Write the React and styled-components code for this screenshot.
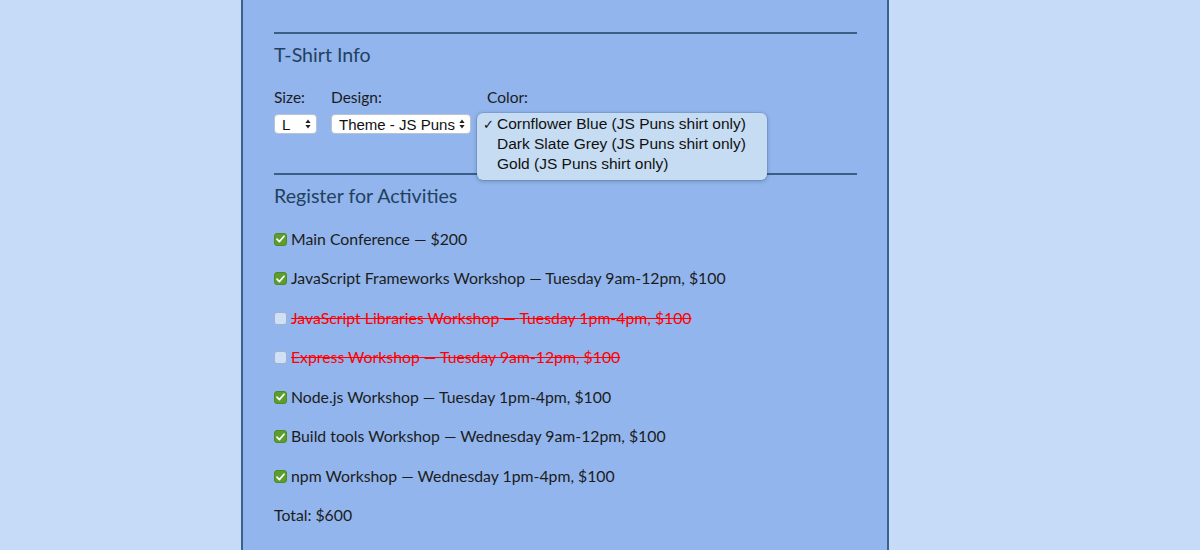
import React from 'react';
import styled, { createGlobalStyle } from 'styled-components';

const GlobalStyle = createGlobalStyle`
    html, body {
        margin: 0;
        padding: 0;
        background: #c6dbf8;
        height: 550px;
        overflow: hidden;
    }
    body {
        font-family: "Lato", "Noto Sans", sans-serif;
        color: #1c1c1c;
    }
`;

const activities = [
    { name: 'Main Conference', info: '$200', checked: true },
    { name: 'JavaScript Frameworks Workshop', info: 'Tuesday 9am-12pm, $100', checked: true },
    { name: 'JavaScript Libraries Workshop', info: 'Tuesday 1pm-4pm, $100', disabled: true },
    { name: 'Express Workshop', info: 'Tuesday 9am-12pm, $100', disabled: true },
    { name: 'Node.js Workshop', info: 'Tuesday 1pm-4pm, $100', checked: true },
    { name: 'Build tools Workshop', info: 'Wednesday 9am-12pm, $100', checked: true },
    { name: 'npm Workshop', info: 'Wednesday 1pm-4pm, $100', checked: true },
];

const colors = [
    'Cornflower Blue (JS Puns shirt only)',
    'Dark Slate Grey (JS Puns shirt only)',
    'Gold (JS Puns shirt only)',
];

function SelectArrows() {
    return (
        <svg width="6" height="10" viewBox="0 0 6 10">
            <path d="M3 0.5 L5.6 4 L0.4 4 Z" fill="#222" />
            <path d="M3 9.5 L5.6 6 L0.4 6 Z" fill="#222" />
        </svg>
    );
}

function CheckBox({ checked }) {
    return (
        <Box checked={checked}>
            {checked && (
                <svg width="9" height="8" viewBox="0 0 9 8">
                    <path d="M1 4.2 L3.4 6.6 L8 1.2" stroke="#fff" strokeWidth="1.7" fill="none" strokeLinecap="round" strokeLinejoin="round" />
                </svg>
            )}
        </Box>
    );
}

class App extends React.Component {
    render() {
        return (
            <>
                <GlobalStyle />
                <Panel>
                    <Section>
                        <Legend>T-Shirt Info</Legend>
                        <ShirtRow>
                            <Field>
                                <FieldLabel>Size:</FieldLabel>
                                <Select width="43px">
                                    <span>L</span>
                                    <SelectArrows />
                                </Select>
                            </Field>
                            <Field>
                                <FieldLabel>Design:</FieldLabel>
                                <Select width="140px">
                                    <span>Theme - JS Puns</span>
                                    <SelectArrows />
                                </Select>
                            </Field>
                            <Field spaced>
                                <FieldLabel>Color:</FieldLabel>
                                <Select width="200px" />
                                <Menu>
                                    {colors.map((c, i) => (
                                        <MenuItem key={c}>
                                            <Tick>{i === 0 ? '✓' : ''}</Tick>
                                            {c}
                                        </MenuItem>
                                    ))}
                                </Menu>
                            </Field>
                        </ShirtRow>
                    </Section>
                    <Section>
                        <Legend>Register for Activities</Legend>
                        <ActivityList>
                            {activities.map((a) => (
                                <Activity key={a.name} disabled={a.disabled}>
                                    <CheckBox checked={a.checked} />
                                    <span>{a.name} — {a.info}</span>
                                </Activity>
                            ))}
                            <Total>Total: $600</Total>
                        </ActivityList>
                    </Section>
                </Panel>
            </>
        );
    }
}

export default App;

const Panel = styled.div`
    margin-left: 241px;
    width: 648px;
    height: 550px;
    box-sizing: border-box;
    border-left: 2px solid #3d6288;
    border-right: 2px solid #3d6288;
    background: #91b5ec;
    padding: 32px 30px 0 31px;
`;

const Section = styled.div`
    border-top: 2px solid #3a5f85;
    padding-top: 9px;
`;

const Legend = styled.div`
    font-size: 19.6px;
    line-height: 24px;
    color: #23415f;
`;

const ShirtRow = styled.div`
    display: flex;
    gap: 14px;
    margin-top: 21px;
    height: 85px;
`;

const Field = styled.div`
    position: relative;
    display: flex;
    flex-direction: column;
    gap: 8px;
    margin-left: ${(p) => (p.spaced ? '2px' : '0')};
`;

const FieldLabel = styled.div`
    font-size: 15.5px;
    line-height: 18px;
    color: #1c1c1c;
`;

const Select = styled.div`
    width: ${(p) => p.width};
    height: 20px;
    box-sizing: border-box;
    background: #fff;
    border: 1px solid #b9c3cf;
    border-radius: 4px;
    display: flex;
    align-items: center;
    justify-content: space-between;
    padding: 0 5px 0 7px;
    font-family: "Liberation Sans", Arial, sans-serif;
    font-size: 15px;
    color: #111;
`;

const Menu = styled.div`
    position: absolute;
    left: -10px;
    top: 25px;
    width: 290px;
    height: 67px;
    box-sizing: border-box;
    background: #c6dcf2;
    border-radius: 6px;
    box-shadow: 0 1px 4px rgba(30, 50, 80, 0.35), 0 0 0 0.5px rgba(30, 50, 80, 0.2);
    padding: 1px 0;
    font-family: "Liberation Sans", Arial, sans-serif;
    font-size: 15.5px;
    color: #111;
`;

const MenuItem = styled.div`
    display: flex;
    align-items: center;
    height: 20px;
`;

const Tick = styled.span`
    width: 20px;
    padding-left: 6px;
    box-sizing: border-box;
    font-size: 13px;
`;

const ActivityList = styled.div`
    display: flex;
    flex-direction: column;
    gap: 19.6px;
    margin-top: 20px;
`;

const Activity = styled.div`
    display: flex;
    align-items: center;
    gap: 4px;
    height: 20px;
    font-size: 15.8px;
    color: ${(p) => (p.disabled ? '#ff0000' : '#1c1c1c')};
    text-decoration: ${(p) => (p.disabled ? 'line-through' : 'none')};
`;

const Box = styled.span`
    width: 13px;
    height: 13px;
    margin-top: 2px;
    box-sizing: border-box;
    border-radius: 3px;
    display: flex;
    align-items: center;
    justify-content: center;
    background: ${(p) => (p.checked ? '#5c9e2c' : '#cfe0f7')};
    border: 1px solid ${(p) => (p.checked ? '#4f8a26' : '#9fb2cd')};
    flex-shrink: 0;
`;

const Total = styled.div`
    font-size: 15.8px;
    line-height: 20px;
`;
